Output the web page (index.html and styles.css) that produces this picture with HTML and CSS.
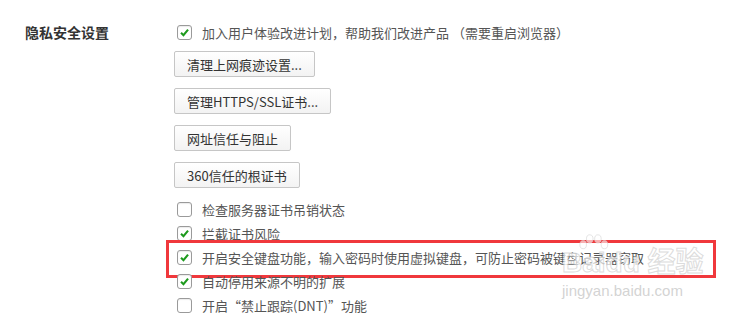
FILE: index.html
```html
<!DOCTYPE html>
<html lang="zh-CN">
<head>
  <meta charset="UTF-8">
  <title>隐私安全设置</title>
  <link rel="stylesheet" href="styles.css">
</head>
<body>
  <div class="section">
    <div class="section-title">隐私安全设置</div>
    <div class="section-body">
      <div class="check-row">
        <span class="box on"><svg viewBox="0 0 15 15"><path d="M3.5 7.8 L6.3 10.6 L11.6 4.2" /></svg></span>
        <span class="label">加入用户体验改进计划，帮助我们改进产品 （需要重启浏览器）</span>
      </div>
      <button class="btn first">清理上网痕迹设置...</button>
      <button class="btn">管理HTTPS/SSL证书...</button>
      <button class="btn">网址信任与阻止</button>
      <button class="btn">360信任的根证书</button>
      <div class="check-list">
        <div class="check-row">
          <span class="box"></span>
          <span class="label">检查服务器证书吊销状态</span>
        </div>
        <div class="check-row">
          <span class="box on"><svg viewBox="0 0 15 15"><path d="M3.5 7.8 L6.3 10.6 L11.6 4.2" /></svg></span>
          <span class="label">拦截证书风险</span>
        </div>
        <div class="check-row marked">
          <span class="box on"><svg viewBox="0 0 15 15"><path d="M3.5 7.8 L6.3 10.6 L11.6 4.2" /></svg></span>
          <span class="label">开启安全键盘功能，输入密码时使用虚拟键盘，可防止密码被键盘记录器窃取</span>
        </div>
        <div class="check-row">
          <span class="box on"><svg viewBox="0 0 15 15"><path d="M3.5 7.8 L6.3 10.6 L11.6 4.2" /></svg></span>
          <span class="label">自动停用来源不明的扩展</span>
        </div>
        <div class="check-row">
          <span class="box"></span>
          <span class="label">开启“禁止跟踪(DNT)”功能</span>
        </div>
      </div>
    </div>
  </div>

  <!-- watermark -->
  <div class="watermark">
    <svg class="paw" viewBox="0 0 40 22">
      <ellipse cx="8" cy="13" rx="4" ry="5" />
      <ellipse cx="16" cy="6" rx="4" ry="5" />
      <ellipse cx="26" cy="6" rx="4" ry="5" />
      <ellipse cx="34" cy="13" rx="4" ry="5" />
    </svg>
    <div class="wm-logo">Bai<span class="wm-du">du</span> 经验</div>
    <div class="wm-url">jingyan.baidu.com</div>
  </div>
</body>
</html>
```

FILE: styles.css
```css
body {
  margin: 0;
  background-color: #fff;
  font-family: "Noto Sans CJK SC", "Noto Sans", sans-serif;
  color: #333;
  position: relative;
  height: 318px;
  overflow: hidden;
}
.section {
  display: flex;
  padding-top: 20px;
}
.section-title {
  width: 149px;
  padding-left: 25px;
  font-size: 14px;
  font-weight: bold;
  line-height: 24px;
  color: #333;
}
.section-body {
  display: flex;
  flex-direction: column;
  align-items: flex-start;
}
.check-row {
  position: relative;
  display: flex;
  align-items: center;
  height: 24px;
  padding-left: 3px;
}
.box {
  width: 13px;
  height: 13px;
  border: 1px solid #9a9a9a;
  border-radius: 3px;
  background-color: #fff;
  box-shadow: inset 0 1px 1px rgba(0, 0, 0, 0.08);
  flex-shrink: 0;
}
.box svg {
  display: block;
  width: 13px;
  height: 13px;
}
.box svg path {
  fill: none;
  stroke: #1d9a1d;
  stroke-width: 2.4;
}
.label {
  margin-left: 10px;
  font-size: 13px;
  color: #555;
  white-space: nowrap;
}
.btn {
  margin-top: 11px;
  height: 26px;
  padding: 0 12px;
  font-family: "Noto Sans CJK SC", "Noto Sans", sans-serif;
  font-size: 13px;
  color: #333;
  background: linear-gradient(#fff, #f3f3f3);
  border: 1px solid #c6c6c6;
  border-radius: 2px;
}
.btn.first {
  margin-top: 7px;
}
.check-list {
  margin-top: 9px;
}
.marked::after {
  content: "";
  position: absolute;
  left: -8px;
  top: -5px;
  width: 544px;
  height: 32px;
  border: 3px solid #f0383c;
}
.watermark {
  position: absolute;
  left: 562px;
  top: 240px;
  width: 150px;
  color: rgba(255, 255, 255, 0.7);
  -webkit-text-stroke: 1px rgba(205, 205, 205, 0.7);
  font-family: "Liberation Sans", Arial, sans-serif;
}
.paw {
  position: absolute;
  left: 14px;
  top: -6px;
  width: 34px;
  height: 18px;
  fill: rgba(255, 255, 255, 0.6);
  stroke: rgba(210, 210, 210, 0.7);
  stroke-width: 1;
}
.wm-logo {
  margin-top: 8px;
  font-size: 28px;
  font-weight: bold;
  line-height: 30px;
  font-family: "Liberation Sans", "Noto Sans CJK SC", sans-serif;
}
.wm-url {
  margin-top: 5px;
  font-size: 15px;
  line-height: 16px;
  -webkit-text-stroke: 0;
  color: rgba(200, 200, 200, 0.8);
}
```
